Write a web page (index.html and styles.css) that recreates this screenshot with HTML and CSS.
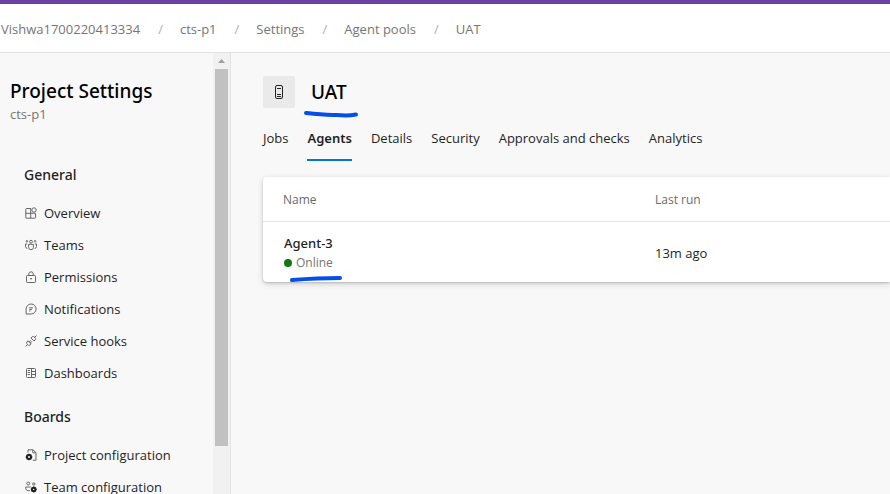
FILE: index.html
```html
<!DOCTYPE html>
<html lang="en">
<head>
<meta charset="utf-8">
<meta name="viewport" content="width=device-width, initial-scale=1">
<title>UAT - Agent pools</title>
<link rel="stylesheet" href="styles.css">
</head>
<body>
<header class="topbar">
  <nav aria-label="Breadcrumb">
    <ol class="crumbs">
      <li><a href="#">Vishwa1700220413334</a></li>
      <li><a href="#">cts-p1</a></li>
      <li><a href="#">Settings</a></li>
      <li><a href="#">Agent pools</a></li>
      <li><a href="#">UAT</a></li>
    </ol>
  </nav>
</header>
<div class="layout">
  <aside class="sidebar">
    <div class="side-content">
      <h2 class="side-title">Project Settings</h2>
      <p class="side-sub">cts-p1</p>
      <nav class="side-nav" aria-label="Project settings">
        <section class="group">
          <h3>General</h3>
          <ul>
            <li><a href="#"><svg class="icon" viewBox="0 0 12 12"><path d="M6 1.5H1.5Q.8 1.5.8 2.2V10.8Q.8 11.2 1.5 11.2H9.8Q10.5 11.2 10.5 10.5V6.5M.8 6.3H10.5M5.7 1.5V11.2"/><circle cx="9" cy="3" r="2.2"/></svg>Overview</a></li>
            <li><a href="#"><svg class="icon" viewBox="0 0 12 12"><circle cx="6" cy="2.7" r="1.4"/><circle cx="1.9" cy="2.3" r=".8"/><circle cx="10.1" cy="2.3" r=".8"/><path d="M3.6 5.3H8.4V8.5Q8.2 10.7 6 10.7T3.6 8.5ZM2.2 5H.5V7.5Q.6 9.2 2.3 9.5M9.8 5H11.5V7.5Q11.4 9.2 9.7 9.5"/></svg>Teams</a></li>
            <li><a href="#"><svg class="icon" viewBox="0 0 12 12"><rect x="1.5" y="4.5" width="9" height="7" rx=".8"/><path d="M3.8 4V2.7Q4 .8 6 .8T8.2 2.7V4"/><circle class="solid" cx="6" cy="7.8" r=".8"/></svg>Permissions</a></li>
            <li><a href="#"><svg class="icon" viewBox="0 0 12 12"><path d="M1.1 11V6A5 5 0 1 1 6.1 11Z"/><path d="M4.2 4.8H8M4.2 6.4H7M4.2 8H5.5"/></svg>Notifications</a></li>
            <li><a href="#"><svg class="icon" viewBox="0 0 12 12"><path d="M.5 11.5L2.6 9.4M9.5 2.5L11.5.5M3 5.8L6.2 9L4.8 10.2Q3.5 10.8 2.4 9.6T1.8 7.2ZM6 3L9 6L10.2 4.8Q11 3.5 9.8 2.2T7.2 1.8ZM4.2 7L5.8 5.4M5.2 8L6.8 6.4"/></svg>Service hooks</a></li>
            <li><a href="#"><svg class="icon" viewBox="0 0 12 12"><rect x="1.5" y="1.5" width="9" height="9" rx="1"/><path d="M6.5 1.5V10.5M2.7 3.5H5M2.7 5.5H5M2.7 7.5H5M6.5 4.5H10.5M6.5 7.5H10.5"/></svg>Dashboards</a></li>
          </ul>
        </section>
        <section class="group">
          <h3>Boards</h3>
          <ul>
            <li><a href="#"><svg class="icon" viewBox="0 0 12 12"><path d="M3 3.5V.8H8L11 3.6V11.2H7.8M7.8.8V3.8H11"/><circle class="gear" cx="4" cy="8" r="2"/><path class="dark" d="M4 4.7V6M4 10V11.3M.7 8H2M6 8H7.3M1.7 5.7L2.6 6.6M5.4 9.4L6.3 10.3M6.3 5.7L5.4 6.6M2.6 9.4L1.7 10.3"/></svg>Project configuration</a></li>
            <li><a href="#"><svg class="icon" viewBox="0 0 12 12"><circle cx="3.2" cy="2.5" r="1.5"/><circle cx="8.8" cy="3" r="1.2"/><path d="M5.7 6H.7V7.5Q1 9.7 3.4 9.7H5"/><circle class="gear" cx="8.7" cy="8.4" r="1.7"/><path class="dark" d="M8.7 5.5V7M8.7 10V11.4M5.8 8.4H7M10.4 8.4H11.7M6.7 6.4L7.5 7.2M9.9 9.6L10.7 10.4M10.7 6.4L9.9 7.2M7.5 9.6L6.7 10.4"/></svg>Team configuration</a></li>
          </ul>
        </section>
      </nav>
    </div>
    <div class="scrollbar" aria-hidden="true">
      <svg class="arrow" viewBox="0 0 7 4"><path d="M3.5 0L7 4H0Z"/></svg>
      <div class="thumb"></div>
    </div>
  </aside>
  <main class="main">
    <div class="page-head">
      <span class="pool-icon"><svg viewBox="0 0 10 16"><rect x="1.5" y="1.5" width="7" height="13" rx="1.5"/><path d="M3 4.5H7M3 10.5H7M3 12.5H7"/></svg></span>
      <h1>UAT<svg class="stroke stroke-title" viewBox="0 0 54 6"><path d="M2 2C14 3 22 4 33 4Q44 5 52 3.5"/></svg></h1>
    </div>
    <nav class="tabs" aria-label="Pool sections">
      <a href="#">Jobs</a>
      <a href="#" class="active" aria-current="page">Agents</a>
      <a href="#">Details</a>
      <a href="#">Security</a>
      <a href="#">Approvals and checks</a>
      <a href="#">Analytics</a>
    </nav>
    <div class="card">
      <table>
        <thead><tr><th scope="col" class="name-col">Name</th><th scope="col">Last run</th></tr></thead>
        <tbody>
          <tr>
            <td>
              <div class="agent">Agent-3</div>
              <div class="status"><span class="dot"></span><span>Online</span><svg class="stroke stroke-status" viewBox="0 0 54 6"><path d="M3 4C16 3 32 2 51 2"/></svg></div>
            </td>
            <td>13m ago</td>
          </tr>
        </tbody>
      </table>
    </div>
  </main>
</div>
</body>
</html>
```
FILE: styles.css
```css
* { box-sizing: border-box; }

body {
  margin: 0;
  height: 100vh;
  display: flex;
  flex-direction: column;
  overflow: hidden;
  background: #f8f8f8;
  color: #1f1f1f;
  font: 13px/20px "Open Sans", "Noto Sans", sans-serif;
}

a { color: inherit; text-decoration: none; }
h1, h2, h3, p, ul, ol { margin: 0; padding: 0; }
ul, ol { list-style: none; }
h1, h2, h3, .agent, .tabs .active { font-family: "Noto Sans", "Open Sans", sans-serif; font-weight: 500; }

.topbar {
  flex: none;
  padding: 15px 0 13px 1px;
  background: #fff;
  border-top: 4px solid #6e40a5;
  border-bottom: 1px solid #e3e3e3;
}

.crumbs { display: flex; color: #767676; white-space: nowrap; }
.crumbs li + li::before { content: "/"; padding: 0 17px 0 18px; color: #b0b0b0; }

.layout { flex: 1; min-height: 0; display: flex; }

.sidebar {
  flex: none;
  width: 231px;
  display: flex;
  overflow: hidden;
  border-right: 1px solid #e3e3e3;
}

.side-content { flex: 1; padding: 24px 0 0 10px; white-space: nowrap; }
.side-title { font-size: 19px; line-height: 28px; color: #000; }
.side-sub { line-height: 18px; color: #767676; }
.side-nav { padding: 40px 0 0 14px; }
.group { margin-bottom: 16px; }
.group h3 { margin-bottom: 10px; font-size: 14px; line-height: 24px; }
.group a { display: flex; align-items: center; gap: 7px; height: 32px; padding-left: 1px; }

.icon { width: 12px; height: 12px; fill: none; stroke: #666; stroke-width: 1; }
.icon .solid { fill: #333; stroke: none; }
.icon .gear { stroke: #222; stroke-width: 2; }
.icon .dark { stroke: #222; stroke-width: 1.4; }

.scrollbar {
  width: 17px;
  display: flex;
  flex-direction: column;
  align-items: center;
  background: #f1f1f1;
}
.arrow { flex: none; width: 7px; height: 4px; margin: 6px 0; fill: #a0a0a0; }
.thumb { width: 13px; height: calc(100% - 64px); background: #c1c1c1; }

.main { flex: 1; min-width: 0; padding: 23px 0 0 32px; overflow: hidden; }

.page-head { display: flex; align-items: center; gap: 16px; }
.pool-icon {
  width: 32px;
  height: 32px;
  display: grid;
  place-items: center;
  background: #eaeaea;
  border-radius: 2px;
}
.pool-icon svg { width: 10px; height: 16px; fill: none; stroke: #222; }
h1 { position: relative; font-size: 19px; line-height: 28px; color: #000; }

.stroke { position: absolute; width: 54px; height: 6px; fill: none; stroke: #034fe8; stroke-width: 4; stroke-linecap: round; overflow: visible; }
.stroke-title { left: -7px; top: 33px; }
.stroke-status { left: 6px; top: 23px; }

.tabs { display: flex; gap: 19px; margin-bottom: 16px; white-space: nowrap; }
.tabs a { padding: 20px 0 11px; border-bottom: 2px solid transparent; }
.tabs .active { font-weight: 600; border-color: #0078d4; }

.card {
  background: #fff;
  border-radius: 4px 0 0 4px;
  box-shadow: 0 2px 6px rgba(0, 0, 0, .16), 0 1px 2px rgba(0, 0, 0, .16);
}
table { width: 100%; border-collapse: collapse; table-layout: fixed; }
th, td { padding: 3px 20px 0; text-align: left; }
th { height: 44px; padding-top: 2px; font-size: 12px; font-weight: 400; color: #6b6b6b; border-bottom: 1px solid #e6e6e6; }
.name-col { width: 372px; }
td { height: 61px; }
.agent { padding-left: 1px; }
.status { position: relative; display: flex; align-items: center; gap: 4px; padding-left: 1px; font-size: 12px; color: #767676; }
.dot { width: 8px; height: 8px; border-radius: 50%; background: #107c10; }
```
